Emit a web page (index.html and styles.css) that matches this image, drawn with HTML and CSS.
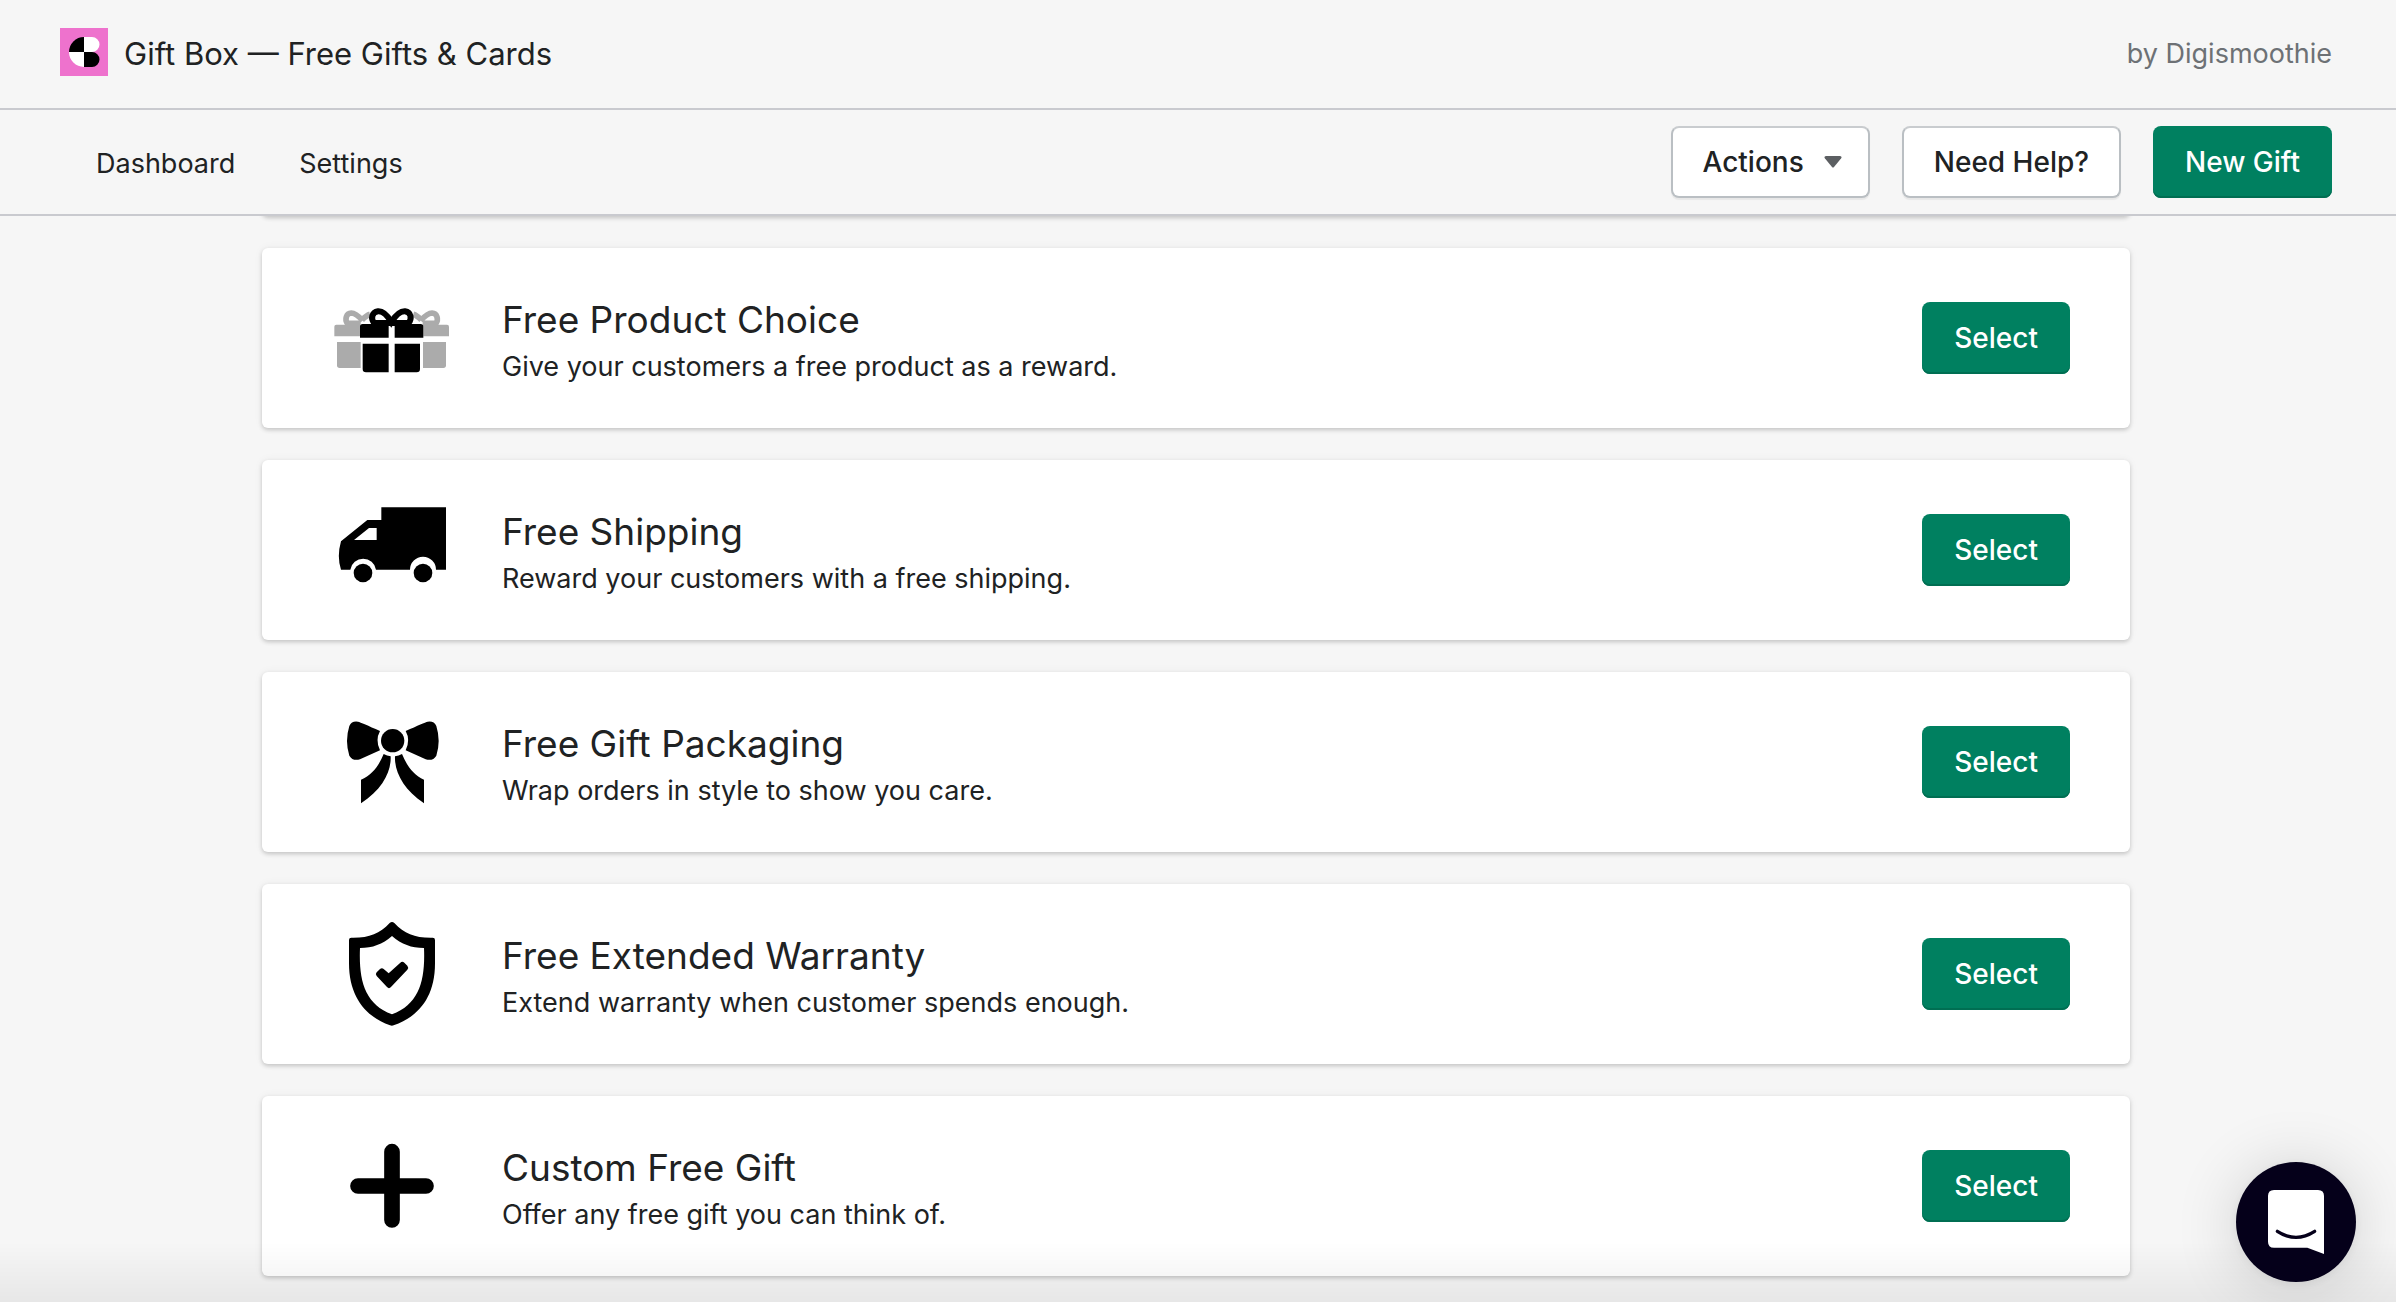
FILE: index.html
```html
<!DOCTYPE html>
<html lang="en">
<head>
<meta charset="utf-8">
<title>Gift Box — Free Gifts &amp; Cards</title>
<link rel="stylesheet" href="styles.css">
</head>
<body>
<div class="top">
  <header class="titlebar">
    <svg class="logo" viewBox="0 0 48 48" aria-hidden="true">
      <rect width="48" height="48" fill="#ee72cd"/>
      <path d="M9 24A15 15 0 0 1 24 9V24Z" fill="#000"/>
      <path d="M9 24A15 15 0 0 0 24 39V24Z" fill="#fff"/>
      <path d="M24 9H32A7.500 7.500 0 0 1 32 24H24Z" fill="#fff"/>
      <path d="M24 24H32A7.500 7.500 0 0 1 32 39H24Z" fill="#000"/>
    </svg>
    <h1 class="title">Gift Box — Free Gifts &amp; Cards</h1>
    <span class="author">by Digismoothie</span>
  </header>
  <nav class="navbar">
    <a class="navlink" href="#dashboard">Dashboard</a>
    <a class="navlink" href="#settings">Settings</a>
    <div class="actions">
      <button class="btn" type="button">Actions
        <svg class="caret" viewBox="0 0 18 12" aria-hidden="true"><path d="M2 0H16Q18.500 .5 17 2.500L10 11Q9 12 8 11L1 2.500Q-.5 .5 2 0Z" fill="#5c5f62"/></svg>
      </button>
      <button class="btn" type="button">Need Help?</button>
      <button class="btn primary" type="button">New Gift</button>
    </div>
  </nav>
</div>
<main class="list">
  <div class="card scrolled"></div>
  <section class="card">
    <svg class="icon" viewBox="6 -36 420 360" aria-hidden="true">
      <g fill="#ababab">
        <path d="M49 104H120V139H43V110Q43 104 49 104Z"/>
        <path d="M310 104H381Q387 104 387 110V139H310Z"/>
        <path d="M51 156H122V234H59Q51 234 51 226Z"/>
        <path d="M309 156H378V226Q378 234 370 234H309Z"/>
      </g>
      <g fill="none" stroke="#ababab" stroke-width="17">
        <path d="M128 92C114 76 102 69 94 69C78 70 74 88 82 100H122M126 90Q140 76 150 73"/>
        <path d="M302 92C316 76 328 69 336 69C352 70 356 88 348 100H308M304 90Q290 76 280 73"/>
      </g>
      <path d="M120 110Q120 102 128 102H206V143H120ZM224 102H302Q310 102 310 110V143H224ZM128 161H206V247H138Q128 247 128 237ZM224 161H300V237Q300 247 290 247H224Z"/>
      <path fill="none" stroke="#000" stroke-width="18" d="M214 96C202 76 187 63 174 64C155 67 152 86 162 99H266C276 86 274 67 255 64C241 63 227 76 214 96Z"/>
    </svg>
    <div class="text"><h2>Free Product Choice</h2><p>Give your customers a free product as a reward.</p></div>
    <button class="btn primary" type="button">Select</button>
  </section>
  <section class="card">
    <svg class="icon" viewBox="6 0 420 360" aria-hidden="true">
      <path fill-rule="evenodd" d="M184 52H378V239H348A39 39 0 0 0 270 239H168A39 39 0 0 0 91 239H63Q50 200 63 154L142 90H184ZM147 114L102 150H170V114Z"/>
      <circle cx="129" cy="249" r="28"/><circle cx="309" cy="249" r="28"/>
    </svg>
    <div class="text"><h2>Free Shipping</h2><p>Reward your customers with a free shipping.</p></div>
    <button class="btn primary" type="button">Select</button>
  </section>
  <section class="card">
    <svg class="icon" viewBox="6 6 420 360" aria-hidden="true">
      <circle cx="218" cy="122" r="35"/>
      <path d="M180 93Q165 120 180 151L120 178Q98 184 88 167Q74 123 88 78Q95 62 114 65Q125 68 180 93ZM257 93Q272 120 257 151L317 178Q339 184 349 167Q363 123 349 78Q342 62 323 65Q312 68 257 93Z"/>
      <path d="M191 162Q201 168 212 169C214 214 188 268 123 310V239C158 225 178 194 191 162ZM246 162Q236 168 225 169C223 214 249 268 312 310V239C279 225 259 194 246 162Z"/>
    </svg>
    <div class="text"><h2>Free Gift Packaging</h2><p>Wrap orders in style to show you care.</p></div>
    <button class="btn primary" type="button">Select</button>
  </section>
  <section class="card">
    <svg class="icon" viewBox="6 12 420 360" aria-hidden="true">
      <path fill-rule="evenodd" d="M209 39Q216 33 223 39C254 72 285 84 338 83Q345 83 345 90V160C345 265 293 321 221 346Q216 348 210 346C139 321 87 262 87 160V90Q87 83 94 83C147 84 178 72 209 39ZM216 78C187 103 158 114 120 114C116 211 134 282 216 313C298 282 316 211 312 114C274 114 245 103 216 78Z"/>
      <path d="M170 187L180 177Q186 173 191 177L206 190L241 158Q247 153 253 158L262 167Q267 173 262 179L213 231Q207 238 201 231L170 198Q165 192 170 187Z"/>
    </svg>
    <div class="text"><h2>Free Extended Warranty</h2><p>Extend warranty when customer spends enough.</p></div>
    <button class="btn primary" type="button">Select</button>
  </section>
  <section class="card">
    <svg class="icon" viewBox="6 18 420 360" aria-hidden="true">
      <path d="M216 95V300M114 198H318" stroke="#000" stroke-width="47" stroke-linecap="round"/>
    </svg>
    <div class="text"><h2>Custom Free Gift</h2><p>Offer any free gift you can think of.</p></div>
    <button class="btn primary" type="button">Select</button>
  </section>
</main>
<div class="fade"></div>
<button class="chat" type="button" aria-label="Open chat">
  <svg viewBox="0 0 360 360" aria-hidden="true">
    <path d="M114 84H246Q264 84 264 102V276L214 257H114Q96 257 96 239V102Q96 84 114 84Z" fill="#fff"/>
    <path d="M124 208Q180 244 236 208" fill="none" stroke="#05001a" stroke-width="10" stroke-linecap="round"/>
  </svg>
</button>
</body>
</html>
```
FILE: styles.css
```css
* { box-sizing: border-box; }
body {
  margin: 0;
  background: #f6f6f6;
  color: #202223;
  font-family: Inter, "Liberation Sans", sans-serif;
  font-size: 27px;
  line-height: 40px;
}
h1, h2, p { margin: 0; font-weight: 400; }
.top {
  position: sticky;
  top: 0;
  z-index: 1;
  background: #f6f6f6;
}
.titlebar, .navbar {
  display: flex;
  align-items: center;
  padding-right: 64px;
  border-bottom: 2px solid #c9cacf;
}
.titlebar {
  gap: 16px;
  height: 110px;
  padding-left: 60px;
  padding-bottom: 4px;
}
.title, .author, .navlink { padding-top: 3px; }
.logo { width: 48px; height: 48px; }
.title { font-size: 31px; }
.author { margin-left: auto; color: #6d7175; }
.navbar {
  gap: 64px;
  height: 106px;
  padding-left: 96px;
}
.navlink { color: inherit; text-decoration: none; }
.actions { display: flex; gap: 32px; margin-left: auto; }
.btn {
  display: inline-flex;
  align-items: center;
  gap: 20px;
  height: 72px;
  padding: 0 30px;
  border: 2px solid #babfc3;
  border-top-color: #c9cccf;
  border-radius: 8px;
  background: #fff;
  color: #202223;
  box-shadow: 0 2px 1px rgba(0, 0, 0, .06);
  font-family: inherit;
  font-size: 28px;
  font-weight: 500;
}
.btn.primary {
  padding: 0 32px;
  border: 0;
  background: #008060;
  color: #fff;
  box-shadow: inset 0 -2px 0 #006e52;
}
.caret { width: 18px; height: 12px; margin-right: -4px; }
.list {
  display: flex;
  flex-direction: column;
  gap: 32px;
  max-width: 2000px;
  margin: 0 auto;
  padding: 0 68px 26px 64px;
}
.card {
  display: flex;
  align-items: center;
  gap: 40px;
  height: 180px;
  padding: 0 60px;
  border-radius: 6px;
  background: #fff;
  box-shadow: 0 0 10px rgba(23, 24, 24, .05), 0 2px 4px rgba(0, 0, 0, .18);
}
.card.scrolled { height: 40px; margin-top: -40px; }
.icon { flex: none; width: 140px; height: 120px; }
.text { flex: 1; padding-top: 4px; }
h2 { font-size: 37px; line-height: 54px; }
.fade {
  position: fixed;
  inset: auto 0 0;
  height: 60px;
  background: linear-gradient(transparent, rgba(0, 0, 0, .06));
  pointer-events: none;
}
.chat {
  position: fixed;
  right: 40px;
  bottom: 20px;
  z-index: 2;
  width: 120px;
  height: 120px;
  padding: 0;
  border: 0;
  border-radius: 50%;
  background: #05001a;
  box-shadow: 0 2px 12px rgba(0, 0, 0, .06), 0 4px 64px rgba(0, 0, 0, .16);
}
.chat svg { display: block; width: 120px; height: 120px; }
```
